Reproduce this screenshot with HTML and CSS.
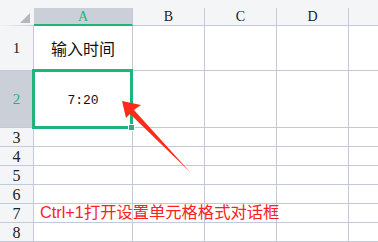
FILE: index.html
```html
<!DOCTYPE html>
<html lang="zh-CN">
<head>
    <meta charset="UTF-8">
    <title>设置单元格格式</title>
    <link rel="stylesheet" href="styles.css">
</head>
<body>
    <div class="sheet">
        <!-- 顶部条 -->
        <div class="top-strip"></div>

        <!-- 列标 -->
        <div class="corner"><span class="tri"></span></div>
        <div class="col-head active">A</div>
        <div class="col-head">B</div>
        <div class="col-head">C</div>
        <div class="col-head">D</div>
        <div class="col-head last"></div>

        <!-- 第1行 -->
        <div class="row-head">1</div>
        <div class="cell center cjk">输入时间</div>
        <div class="cell"></div><div class="cell"></div><div class="cell"></div><div class="cell last"></div>

        <!-- 第2行 -->
        <div class="row-head active">2</div>
        <div class="cell center mono">7:20</div>
        <div class="cell"></div><div class="cell"></div><div class="cell"></div><div class="cell last"></div>

        <div class="row-head big">3</div>
        <div class="cell"></div><div class="cell"></div><div class="cell"></div><div class="cell"></div><div class="cell last"></div>

        <div class="row-head big">4</div>
        <div class="cell"></div><div class="cell"></div><div class="cell"></div><div class="cell"></div><div class="cell last"></div>

        <div class="row-head big">5</div>
        <div class="cell"></div><div class="cell"></div><div class="cell"></div><div class="cell"></div><div class="cell last"></div>

        <div class="row-head big">6</div>
        <div class="cell"></div><div class="cell"></div><div class="cell"></div><div class="cell"></div><div class="cell last"></div>

        <div class="row-head big">7</div>
        <div class="cell note">Ctrl+1打开设置单元格格式对话框</div>
        <div class="cell"></div><div class="cell"></div><div class="cell"></div><div class="cell last"></div>

        <div class="row-head big">8</div>
        <div class="cell"></div><div class="cell"></div><div class="cell"></div><div class="cell"></div><div class="cell last"></div>

        <!-- 选中框 -->
        <div class="selection"><span class="handle"></span></div>

        <!-- 箭头 -->
        <svg class="arrow" width="378" height="242" viewBox="0 0 378 242">
            <polygon points="122,101 141,105 134,110 190,172 130,114 126,118" fill="#ff2a1a"/>
        </svg>
    </div>
</body>
</html>
```

FILE: styles.css
```css
* {
    margin: 0;
    padding: 0;
    box-sizing: border-box;
}

body {
    width: 378px;
    height: 242px;
    overflow: hidden;
    background: #fff;
    font-family: 'Liberation Serif', serif;
}

.sheet {
    position: relative;
    display: grid;
    grid-template-columns: 34px 99px 72px 72px 72px 29px;
    grid-template-rows: 8px 18px 45px 57px repeat(6, 19px);
    width: 378px;
    height: 242px;
}

.top-strip {
    grid-column: 1 / -1;
    background: #f4f5f7;
}

/* 列标 */
.corner {
    background: #f4f5f7;
    border-bottom: 1px solid;
    border-image: linear-gradient(to right, #f4f5f7, #c3c9d8) 1;
    position: relative;
}

.tri {
    position: absolute;
    left: 20px;
    top: 5px;
    width: 0;
    height: 0;
    border-left: 10px solid transparent;
    border-bottom: 10px solid #b5b7bb;
}

.col-head {
    background: #f4f5f7;
    border-right: 1px solid #c3c9d8;
    border-bottom: 1px solid #c3c9d8;
    display: flex;
    justify-content: center;
    align-items: flex-end;
    font-size: 14px;
    line-height: 14px;
    padding-bottom: 1px;
    color: #222;
}

.col-head.active {
    background: #cbcfd8;
    color: #1fb57a;
    border-bottom: 2px solid #1fb57a;
    padding-bottom: 0;
}

.col-head.last,
.cell.last {
    border-right: none;
}

/* 行号 */
.row-head {
    background: #f4f5f7;
    border-right: 1px solid #c3c9d8;
    border-bottom: 1px solid #c3c9d8;
    display: flex;
    justify-content: center;
    align-items: center;
    font-size: 15px;
    color: #222;
}

.row-head.active {
    background: #cbcfd8;
    color: #1fb57a;
}

.row-head.big {
    font-size: 16px;
    padding-top: 1px;
}

/* 单元格 */
.cell {
    border-right: 1px solid #c3c9d8;
    border-bottom: 1px solid #c3c9d8;
    display: flex;
    align-items: center;
    color: #111;
}

.center {
    justify-content: center;
}

.cjk {
    font-family: 'Noto Sans CJK SC', sans-serif;
    font-size: 16px;
}

.mono {
    font-family: 'Liberation Mono', monospace;
    font-size: 13px;
    padding-top: 2px;
}

.note {
    font-family: 'Liberation Sans', 'Noto Sans CJK SC', sans-serif;
    font-size: 16.3px;
    color: #ff2020;
    white-space: nowrap;
    overflow: visible;
    padding-left: 6px;
    padding-bottom: 4px;
    position: relative;
    z-index: 1;
}

/* 选中框 */
.selection {
    position: absolute;
    left: 32px;
    top: 69px;
    width: 101px;
    height: 60px;
    border: 3px solid #1fb57a;
}

.handle {
    position: absolute;
    right: -5px;
    bottom: -5px;
    width: 7px;
    height: 7px;
    background: #1fb57a;
    border: 1px solid #fff;
}

.arrow {
    position: absolute;
    left: 0;
    top: 0;
    z-index: 2;
}
```
